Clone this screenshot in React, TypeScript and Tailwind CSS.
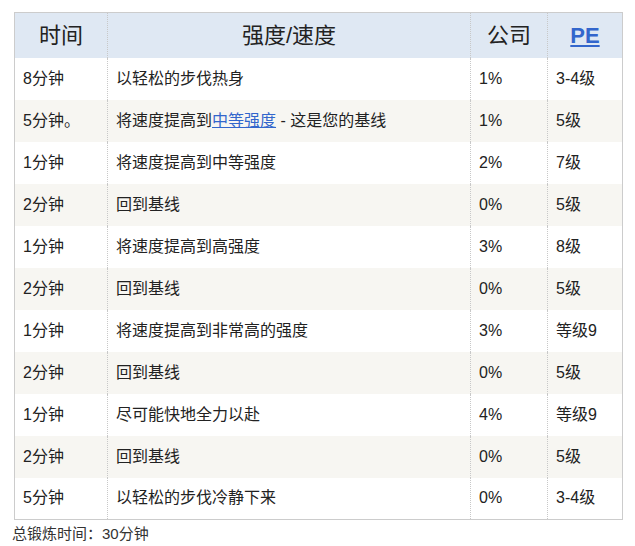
import React from "react";

const rows: [string, React.ReactNode, string, string][] = [
  ["8分钟", "以轻松的步伐热身", "1%", "3-4级"],
  ["5分钟。", <>将速度提高到<a className="text-[#3366cc] underline">中等强度</a> - 这是您的基线</>, "1%", "5级"],
  ["1分钟", "将速度提高到中等强度", "2%", "7级"],
  ["2分钟", "回到基线", "0%", "5级"],
  ["1分钟", "将速度提高到高强度", "3%", "8级"],
  ["2分钟", "回到基线", "0%", "5级"],
  ["1分钟", "将速度提高到非常高的强度", "3%", "等级9"],
  ["2分钟", "回到基线", "0%", "5级"],
  ["1分钟", "尽可能快地全力以赴", "4%", "等级9"],
  ["2分钟", "回到基线", "0%", "5级"],
  ["5分钟", "以轻松的步伐冷静下来", "0%", "3-4级"],
];

const font = { fontFamily: '"Liberation Sans", "Noto Sans CJK SC", sans-serif' };

export default function App() {
  return (
    <div className="bg-white w-[635px] h-[546px] pt-3 pl-[14px] text-[#222]" style={font}>
      <table className="w-[608px] border-collapse border border-[#cccccc] table-fixed">
        <colgroup>
          <col className="w-[93px]" />
          <col className="w-[363px]" />
          <col className="w-[77px]" />
          <col className="w-[75px]" />
        </colgroup>
        <thead>
          <tr className="bg-[#dfe8f3] h-[45px] text-[22px]">
            <th className="font-normal text-center border-r border-dotted border-[#c8c8c8]">时间</th>
            <th className="font-normal text-center border-r border-dotted border-[#c8c8c8]">强度/速度</th>
            <th className="font-normal text-center border-r border-dotted border-[#c8c8c8]">公司</th>
            <th className="font-bold text-center text-[#3366cc]"><span className="underline">PE</span></th>
          </tr>
        </thead>
        <tbody>
          {rows.map((r, i) => (
            <tr key={i} className={`h-[42px] text-[16px] ${i % 2 === 1 ? "bg-[#f7f6f2]" : "bg-white"}`}>
              <td className="pl-2 border-r border-dotted border-[#c8c8c8]">{r[0]}</td>
              <td className="pl-2 border-r border-dotted border-[#c8c8c8]">{r[1]}</td>
              <td className="pl-2 border-r border-dotted border-[#c8c8c8]">{r[2]}</td>
              <td className="pl-2">{r[3]}</td>
            </tr>
          ))}
        </tbody>
      </table>
      <div className="text-[15px] -ml-[2px] mt-[3px] text-[#333]">总锻炼时间：30分钟</div>
    </div>
  );
}
